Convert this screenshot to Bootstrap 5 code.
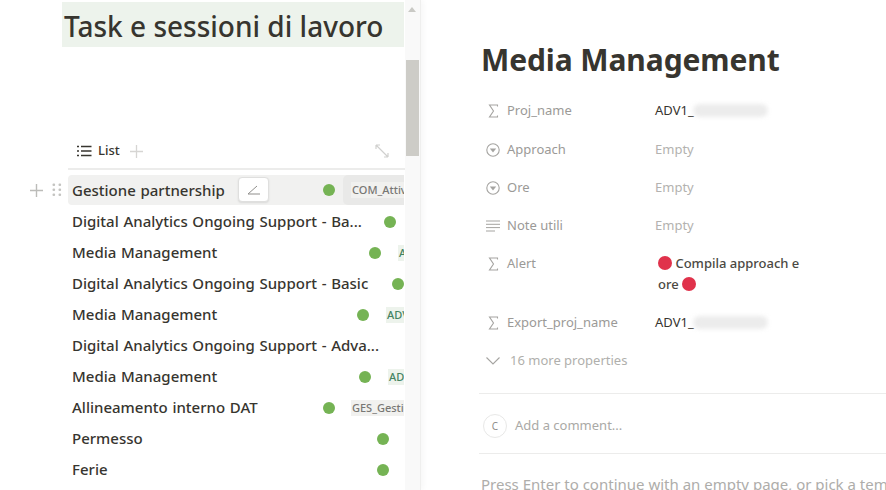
<!DOCTYPE html>
<html>
<head>
  <title>Task e sessioni di lavoro</title>
  <meta charset="UTF-8">
  <meta name="viewport" content="width=device-width, initial-scale=1.0">
  <link href="https://cdn.jsdelivr.net/npm/bootstrap@5.3.0/dist/css/bootstrap.min.css" rel="stylesheet">
  <style>
    html, body { height: 490px; overflow: hidden; }
    body { font-family: "Noto Sans", "Open Sans", sans-serif; color: #37352f; background: #fff; }
    .left-pane { width: 421px; height: 490px; flex: none; border-right: 1px solid #efefee; box-shadow: 2px 0 6px rgba(0,0,0,.04); }
    .left-main { width: 405px; padding-top: 2px; flex: none; position: relative; }
    .scroll-track { width: 15px; background: #f9f9f9; height: 490px; padding-top: 60px; position: relative; }
    .scroll-arrow { position: absolute; top: 7px; left: 3px; border: 4px solid transparent; border-top: 0; border-bottom: 5px solid #c9c9c5; }
    .scroll-thumb { width: 13px; height: 96px; margin-left: 1px; background: #cdccc7; }
    .db-title { margin: 0 1px 0 62px; height: 45px; background: #edf3ec; font-size: 28px; line-height: 48px; padding-left: 2px; white-space: nowrap; font-weight: 500; }
    .view-bar { margin: 88px 0 0 68px; height: 35px; border-bottom: 2px solid #ececeb; padding: 0 0 1px 9px; font-size: 13px; font-weight: 500; gap: 6px; }
    .rows-wrap { margin: 5px 1px 0 68px; overflow: hidden; }
    .task-row { height: 31px; padding-left: 4px; white-space: nowrap; font-size: 15px; font-weight: 500; word-spacing: .8px; overflow: visible; }
    .task-row.hovered { height: 30px; margin-bottom: 1px; background: #f1f1f0; border-radius: 4px 0 0 4px; }
    .task-name { flex: none; }
    .dot { width: 12px; height: 12px; border-radius: 50%; background: #75b354; flex: none; }
    .pill { font-size: 11px; font-weight: 500; height: 16px; line-height: 16px; flex: none; padding-left: 1px; }
    .pill-green { background: #edf3ec; color: #448361; }
    .pill-gray { background: #f1f1ef; color: #787774; }
    .cell-gray { background: #e9e9e8; margin-left: 8px; padding: 7px 0 7px 8px; border-radius: 5px 0 0 5px; height: 30px; flex: 1; }
    .edit-btn { position: absolute; left: 170px; top: 2px; width: 31px; height: 25px; background: #fff; border: 1px solid #dfdfde; border-radius: 4px; box-shadow: 0 1px 2px rgba(0,0,0,.1); padding: 0; }
    .row-tools { position: absolute; left: 30px; top: 183px; gap: 9px; }
    .n1 { width: 251px; } .n2 { width: 312px; } .n3 { width: 297px; } .n4 { width: 320px; }
    .n5 { width: 285px; } .n6 { width: 287px; } .n8 { width: 305px; }
    .g1 { margin-left: 17px; } .g2 { margin-left: 16px; } .g3 { margin-left: 17px; }
    .right-pane { flex: 1; padding: 0 0 0 60px; overflow: hidden; }
    .page-title { font-size: 30px; font-weight: 700; margin: 41px 0 21px; line-height: 38px; white-space: nowrap; letter-spacing: -.1px; }
    .prop-row { font-size: 13px; line-height: 21px; margin-bottom: 17px; }
    .prop-row.first-row { margin-bottom: 18px; }
    .prop-label { width: 169px; flex: none; color: #9b9a97; padding-left: 0; gap: 7px; margin-left: 5px; }
    .prop-label svg { flex: none; }
    .prop-empty { color: #b3b2af; }
    .blur-mask { display: inline-block; width: 75px; height: 13px; margin-left: -1px; background: #ececec; border-radius: 7px; filter: blur(2px); vertical-align: -2px; }
    .alert-val { width: 153px; padding-left: 3px; font-weight: 500; color: #4b4943; }
    .red-dot { display: inline-block; width: 14px; height: 14px; background: #e0324b; border-radius: 50%; vertical-align: -2px; }
    .more-row { font-size: 13px; color: #b0afac; padding-left: 5px; gap: 10px; margin-top: 1px; height: 21px; }
    .divider { border-top: 1px solid #ececeb; margin-left: -2px; }
    .more-gap { margin-top: 22px; }
    .comment-row { height: 59px; gap: 8px; color: #aaa9a6; font-size: 13px; margin-left: 2px; padding-top: 5px; }
    .avatar { width: 24px; height: 24px; border: 1px solid #e8e8e7; border-radius: 50%; font-size: 10px; color: #8f8e8b; }
    .press-text { font-size: 15px; color: #aeadaa; white-space: nowrap; margin-top: 20px; line-height: 20px; }
  </style>
</head>
<body class="d-flex">
  <div class="left-pane d-flex">
    <div class="left-main">
      <h1 class="db-title">Task e sessioni di lavoro</h1>
      <div class="view-bar d-flex align-items-center">
        <svg width="15" height="12" viewBox="0 0 15 12" fill="none" stroke="#37352f" stroke-width="1.3"><path d="M0 1.5h2M4 1.5h10.5M0 6h2M4 6h10.5M0 10.5h2M4 10.5h10.5"/></svg>
        <span>List</span>
        <svg class="ms-1" width="13" height="13" viewBox="0 0 13 13" stroke="#d6d5d3" stroke-width="1.3"><path d="M6.5 0v13M0 6.5h13"/></svg>
        <svg class="ms-auto me-3" width="14" height="14" viewBox="0 0 14 14" fill="none" stroke="#d0d0ce" stroke-width="1.2"><path d="M1 1l12 12M1 1h4M1 1v4M13 13h-4M13 13v-4"/></svg>
      </div>
      <div class="row-tools d-flex align-items-center">
        <svg width="13" height="13" viewBox="0 0 13 13" stroke="#bcbcb9" stroke-width="1.4"><path d="M6.5 0v13M0 6.5h13"/></svg>
        <svg width="10" height="14" viewBox="0 0 10 14" fill="#c4c4c1"><rect x=".5" y=".5" width="2.6" height="2.6" rx="1"/><rect x="6.5" y=".5" width="2.6" height="2.6" rx="1"/><rect x=".5" y="5.5" width="2.6" height="2.6" rx="1"/><rect x="6.5" y="5.5" width="2.6" height="2.6" rx="1"/><rect x=".5" y="10.5" width="2.6" height="2.6" rx="1"/><rect x="6.5" y="10.5" width="2.6" height="2.6" rx="1"/></svg>
      </div>
      <div class="rows-wrap">
        <div class="task-row hovered d-flex align-items-center position-relative">
          <div class="task-name n1">Gestione partnership</div>
          <button class="edit-btn d-flex align-items-center justify-content-center" type="button">
            <svg width="13" height="10" viewBox="0 0 13 10" fill="none" stroke="#8f8e8b" stroke-width="1"><path d="M1 9h12M1 9l9-8"/></svg>
          </button>
          <span class="dot"></span>
          <div class="cell-gray d-flex align-items-center"><span class="pill pill-gray">COM_Attivita</span></div>
        </div>
        <div class="task-row d-flex align-items-center"><div class="task-name n2">Digital Analytics Ongoing Support - Ba...</div><span class="dot"></span></div>
        <div class="task-row d-flex align-items-center"><div class="task-name n3">Media Management</div><span class="dot"></span><span class="pill pill-green g1">ADV1</span></div>
        <div class="task-row d-flex align-items-center"><div class="task-name n4">Digital Analytics Ongoing Support - Basic</div><span class="dot"></span></div>
        <div class="task-row d-flex align-items-center"><div class="task-name n5">Media Management</div><span class="dot"></span><span class="pill pill-green g1">ADV1_</span></div>
        <div class="task-row d-flex align-items-center"><div class="task-name">Digital Analytics Ongoing Support - Adva...</div></div>
        <div class="task-row d-flex align-items-center"><div class="task-name n6">Media Management</div><span class="dot"></span><span class="pill pill-green g3">ADV1_</span></div>
        <div class="task-row d-flex align-items-center"><div class="task-name n1">Allineamento interno DAT</div><span class="dot"></span><span class="pill pill-gray g2">GES_Gestione</span></div>
        <div class="task-row d-flex align-items-center"><div class="task-name n8">Permesso</div><span class="dot"></span></div>
        <div class="task-row d-flex align-items-center"><div class="task-name n8">Ferie</div><span class="dot"></span></div>
      </div>
    </div>
    <div class="scroll-track">
      <div class="scroll-arrow"></div>
      <div class="scroll-thumb"></div>
    </div>
  </div>

  <div class="right-pane">
    <h2 class="page-title">Media Management</h2>

    <div class="prop-row first-row d-flex">
      <div class="prop-label d-flex align-items-center">
        <svg width="14" height="14" viewBox="0 0 14 14" fill="none" stroke="#a5a4a1" stroke-width="1.1"><path d="M11.5 2.5V1H3.5l4 6-4 6h8v-1.5"/></svg>
        <span>Proj_name</span>
      </div>
      <div>ADV1_<span class="blur-mask"></span></div>
    </div>
    <div class="prop-row d-flex">
      <div class="prop-label d-flex align-items-center">
        <svg width="14" height="14" viewBox="0 0 14 14" fill="none" stroke="#a5a4a1" stroke-width="1.1"><circle cx="7" cy="7" r="6.2"/><path d="M3.8 5.4h6.4L7 9.6z" fill="#a5a4a1" stroke="none"/></svg>
        <span>Approach</span>
      </div>
      <div class="prop-empty">Empty</div>
    </div>
    <div class="prop-row d-flex">
      <div class="prop-label d-flex align-items-center">
        <svg width="14" height="14" viewBox="0 0 14 14" fill="none" stroke="#a5a4a1" stroke-width="1.1"><circle cx="7" cy="7" r="6.2"/><path d="M3.8 5.4h6.4L7 9.6z" fill="#a5a4a1" stroke="none"/></svg>
        <span>Ore</span>
      </div>
      <div class="prop-empty">Empty</div>
    </div>
    <div class="prop-row d-flex">
      <div class="prop-label d-flex align-items-center">
        <svg width="14" height="12" viewBox="0 0 14 12" fill="none" stroke="#a5a4a1" stroke-width="1"><path d="M0 1h14M0 4.3h14M0 7.6h14M0 11h9"/></svg>
        <span>Note utili</span>
      </div>
      <div class="prop-empty">Empty</div>
    </div>
    <div class="prop-row d-flex">
      <div class="prop-label d-flex align-items-start">
        <svg class="mt-1" width="14" height="14" viewBox="0 0 14 14" fill="none" stroke="#a5a4a1" stroke-width="1.1"><path d="M11.5 2.5V1H3.5l4 6-4 6h8v-1.5"/></svg>
        <span>Alert</span>
      </div>
      <div class="alert-val"><span class="red-dot"></span> Compila approach e ore <span class="red-dot"></span></div>
    </div>
    <div class="prop-row d-flex">
      <div class="prop-label d-flex align-items-center">
        <svg width="14" height="14" viewBox="0 0 14 14" fill="none" stroke="#a5a4a1" stroke-width="1.1"><path d="M11.5 2.5V1H3.5l4 6-4 6h8v-1.5"/></svg>
        <span>Export_proj_name</span>
      </div>
      <div>ADV1_<span class="blur-mask"></span></div>
    </div>
    <div class="more-row d-flex align-items-center">
      <svg width="14" height="8" viewBox="0 0 14 8" fill="none" stroke="#a5a4a1" stroke-width="1.1"><path d="M.5.5L7 7l6.5-6.5"/></svg>
      <span>16 more properties</span>
    </div>

    <div class="divider more-gap"></div>
    <div class="comment-row d-flex align-items-center">
      <span class="avatar d-flex align-items-center justify-content-center">C</span>
      <span>Add a comment...</span>
    </div>
    <div class="divider"></div>
    <div class="press-text">Press Enter to continue with an empty page, or pick a template</div>
  </div>
  <script src="https://cdn.jsdelivr.net/npm/bootstrap@5.3.0/dist/js/bootstrap.bundle.min.js"></script>
</body>
</html>
